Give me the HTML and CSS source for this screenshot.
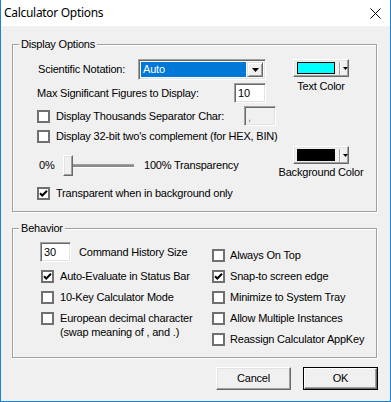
FILE: index.html
```html
<!DOCTYPE html>
<html>
<head>
<meta charset="utf-8">
<title>Calculator Options</title>
<link rel="stylesheet" href="styles.css">
</head>
<body>
<div class="window">
  <div class="titlebar">
    <span class="title">Calculator Options</span>
    <svg class="close" width="11" height="11" viewBox="0 0 11 11"><path d="M0.5 0.5L10.5 10.5M10.5 0.5L0.5 10.5" stroke="#000" stroke-width="1"/></svg>
  </div>
  <div class="client">
    <div class="group g1">
      <span class="legend">Display Options</span>
      <div class="g1-left">
        <div class="row r1">
          <span class="lbl lbl-sci">Scientific Notation:</span>
          <div class="combo">
            <span class="combo-field">Auto</span>
            <span class="combo-btn"><svg width="7" height="4" viewBox="0 0 7 4"><path d="M0 0H7L3.5 4Z" fill="#000"/></svg></span>
          </div>
        </div>
        <div class="row r2">
          <span class="lbl lbl-max">Max Significant Figures to Display:</span>
          <div class="edit">10</div>
        </div>
        <div class="row r3">
          <span class="cb"></span>
          <span class="lbl grow">Display Thousands Separator Char:</span>
          <div class="edit disabled">,</div>
        </div>
        <div class="row r4">
          <span class="cb"></span>
          <span class="lbl">Display 32-bit two's complement (for HEX, BIN)</span>
        </div>
        <div class="row r5">
          <span class="lbl pct">0%</span>
          <div class="slider"><span class="thumb"></span><span class="track"></span></div>
          <span class="lbl trans">100% Transparency</span>
        </div>
        <div class="row r6">
          <span class="cb checked"><svg width="9" height="9" viewBox="0 0 9 9"><path d="M1 4.2L3.3 6.5L8 1.8" fill="none" stroke="#000" stroke-width="2"/></svg></span>
          <span class="lbl">Transparent when in background only</span>
        </div>
      </div>
      <div class="g1-right">
        <div class="colorbtn cbtn-text">
          <span class="swatch cyan"></span>
          <span class="sep"></span>
          <svg class="arr" width="5" height="3" viewBox="0 0 5 3"><path d="M0 0H5L2.5 3Z" fill="#000"/></svg>
        </div>
        <span class="clabel clabel-text">Text Color</span>
        <div class="colorbtn cbtn-bg">
          <span class="swatch black"></span>
          <span class="sep"></span>
          <svg class="arr" width="5" height="3" viewBox="0 0 5 3"><path d="M0 0H5L2.5 3Z" fill="#000"/></svg>
        </div>
        <span class="clabel clabel-bg">Background Color</span>
      </div>
    </div>

    <div class="group g2">
      <span class="legend">Behavior</span>
      <div class="g2-left">
        <div class="row hist">
          <div class="edit edit30">30</div>
          <span class="lbl histlbl">Command History Size</span>
        </div>
        <div class="cbrow first-left">
          <span class="cb checked"><svg width="9" height="9" viewBox="0 0 9 9"><path d="M1 4.2L3.3 6.5L8 1.8" fill="none" stroke="#000" stroke-width="2"/></svg></span>
          <span class="lbl">Auto-Evaluate in Status Bar</span>
        </div>
        <div class="cbrow">
          <span class="cb"></span>
          <span class="lbl">10-Key Calculator Mode</span>
        </div>
        <div class="cbrow multi">
          <span class="cb"></span>
          <span class="lbl">European decimal character<br>(swap meaning of , and .)</span>
        </div>
      </div>
      <div class="g2-right">
        <div class="cbrow">
          <span class="cb"></span>
          <span class="lbl">Always On Top</span>
        </div>
        <div class="cbrow">
          <span class="cb checked"><svg width="9" height="9" viewBox="0 0 9 9"><path d="M1 4.2L3.3 6.5L8 1.8" fill="none" stroke="#000" stroke-width="2"/></svg></span>
          <span class="lbl">Snap-to screen edge</span>
        </div>
        <div class="cbrow">
          <span class="cb"></span>
          <span class="lbl">Minimize to System Tray</span>
        </div>
        <div class="cbrow">
          <span class="cb"></span>
          <span class="lbl">Allow Multiple Instances</span>
        </div>
        <div class="cbrow">
          <span class="cb"></span>
          <span class="lbl">Reassign Calculator AppKey</span>
        </div>
      </div>
    </div>

    <div class="buttons">
      <div class="btn">Cancel</div>
      <div class="btn default"><span class="btn-inner">OK</span></div>
    </div>
  </div>
</div>
</body>
</html>
```

FILE: styles.css
```css
* { box-sizing: border-box; }
html, body { margin: 0; padding: 0; }
body {
  width: 391px;
  height: 402px;
  background: #fff;
  font-family: "Liberation Sans", Arial, sans-serif;
  font-size: 11px;
  letter-spacing: -0.2px;
  color: #000;
  overflow: hidden;
}
.window {
  width: 391px;
  height: 402px;
  border: 1px solid #1883d7;
  border-top: 0;
  display: flex;
  flex-direction: column;
}
.titlebar {
  height: 26px;
  flex: none;
  background: #fff;
  display: flex;
  align-items: center;
  padding-left: 3px;
}
.title {
  font-family: "Noto Sans", "Segoe UI", sans-serif;
  font-size: 12px;
  letter-spacing: -0.3px;
  line-height: 16px;
}
.close { margin-left: auto; margin-right: 9px; }

.client {
  flex: 1;
  background: #f0f0f0;
  padding: 18px 12px 0 11px;
  display: flex;
  flex-direction: column;
}
.group {
  position: relative;
  width: 365px;
  border: 1px solid #a0a0a0;
  box-shadow: inset 1px 1px 0 #fff, 1px 1px 0 #fff;
  display: flex;
  flex: none;
}
.g1 { height: 168px; }
.g2 { height: 130px; margin-top: 16px; }
.legend {
  position: absolute;
  top: -8px;
  left: 6px;
  padding: 0 2px;
  background: #f0f0f0;
  line-height: 14px;
  white-space: nowrap;
}

.lbl { white-space: nowrap; line-height: 13px; }
.grow { flex: 1; }
.row { display: flex; align-items: center; flex: none; }

/* Display options */
.g1-left {
  width: 263px;
  padding: 14px 0 0 24px;
  display: flex;
  flex-direction: column;
}
.r1 { height: 21px; }
.r2 { height: 20px; margin-top: 3px; }
.r3 { height: 20px; margin-top: 3px; }
.r4 { height: 17px; margin-top: 2px; }
.r5 { height: 21px; margin-top: 10px; }
.r6 { height: 17px; margin-top: 9px; }
.lbl-sci { width: 101px; padding-left: 1px; }
.lbl-max { width: 197px; }
.pct { width: 26px; padding-left: 2px; }
.trans { margin-left: 10px; }

.combo {
  width: 128px;
  height: 21px;
  background: #fff;
  border: 1px solid;
  border-color: #a0a0a0 #fff #fff #a0a0a0;
  box-shadow: inset 1px 1px 0 #696969, inset -1px -1px 0 #e3e3e3;
  padding: 2px;
  display: flex;
}
.combo-field {
  flex: 1;
  background: #0078d7;
  color: #fff;
  padding-left: 2px;
  line-height: 15px;
  margin-right: 1px;
}
.combo-btn {
  width: 16px;
  background: #f0f0f0;
  border: 1px solid;
  border-color: #e3e3e3 #696969 #696969 #e3e3e3;
  box-shadow: inset 1px 1px 0 #fff, inset -1px -1px 0 #a0a0a0;
  display: flex;
  align-items: center;
  justify-content: center;
}

.edit {
  width: 32px;
  height: 20px;
  background: #fff;
  border: 1px solid;
  border-color: #a0a0a0 #fff #fff #a0a0a0;
  box-shadow: inset 1px 1px 0 #696969, inset -1px -1px 0 #e3e3e3;
  padding-left: 3px;
  line-height: 18px;
  flex: none;
}
.edit.disabled {
  background: #f0f0f0;
  color: #8a8a8a;
  line-height: 20px;
}

.cb {
  width: 13px;
  height: 13px;
  flex: none;
  background: #fff;
  border: 2px solid #707070;
  margin-right: 6px;
  display: flex;
  align-items: center;
  justify-content: center;
}

.slider {
  width: 71px;
  height: 21px;
  display: flex;
  align-items: center;
}
.thumb {
  width: 10px;
  height: 21px;
  flex: none;
  background: #f0f0f0;
  border: 1px solid;
  border-color: #fff #696969 #696969 #fff;
  box-shadow: inset -1px -1px 0 #a0a0a0, inset 1px 1px 0 #e3e3e3;
}
.track {
  flex: 1;
  height: 4px;
  border-top: 1px solid #a0a0a0;
  border-bottom: 1px solid #fff;
  background: #8c8c8c;
}

.g1-right {
  width: 90px;
  display: flex;
  flex-direction: column;
  align-items: center;
  padding-top: 14px;
}
.colorbtn {
  width: 56px;
  height: 18px;
  flex: none;
  background: #f0f0f0;
  border: 1px solid;
  border-color: #fff #696969 #696969 #fff;
  box-shadow: inset -1px -1px 0 #a0a0a0, inset 1px 1px 0 #e3e3e3;
  display: flex;
  align-items: center;
  padding-left: 3px;
}
.swatch {
  width: 38px;
  height: 12px;
  border: 1px solid #000;
}
.swatch.cyan { background: #00ffff; }
.swatch.black { background: #000; }
.sep {
  width: 2px;
  height: 13px;
  margin-left: 4px;
  border-left: 1px solid #a0a0a0;
  border-right: 1px solid #fff;
}
.arr { margin-left: 2px; }
.clabel { line-height: 13px; white-space: nowrap; }
.clabel-text { margin-top: 3px; }
.cbtn-bg { margin-top: 53px; }
.clabel-bg { margin-top: 2px; }

/* Behavior */
.g2-left {
  width: 199px;
  padding: 13px 0 0 27px;
  display: flex;
  flex-direction: column;
}
.hist { height: 20px; }
.edit30 { width: 31px; }
.histlbl { margin-left: 8px; }
.cbrow {
  display: flex;
  align-items: flex-start;
  height: 21px;
  padding-top: 4px;
  flex: none;
}
.g2-left .cbrow { margin-left: 1px; }
.first-left { margin-top: 4px; }
.cbrow.multi { height: 34px; }
.cbrow.multi .lbl { line-height: 14px; margin-top: -1px; }
.g2-right {
  flex: 1;
  padding-top: 16px;
  display: flex;
  flex-direction: column;
}
.g2-right .cb { margin-right: 5px; }

.buttons {
  display: flex;
  justify-content: flex-end;
  gap: 12px;
  margin-top: 9px;
}
.btn {
  width: 75px;
  height: 23px;
  background: #f0f0f0;
  border: 1px solid;
  border-color: #fff #696969 #696969 #fff;
  box-shadow: inset -1px -1px 0 #a0a0a0, inset 1px 1px 0 #e3e3e3;
  display: flex;
  align-items: center;
  justify-content: center;
  line-height: 13px;
}
.btn.default {
  border: 1px solid #000;
  box-shadow: none;
  padding: 0;
}
.btn-inner {
  width: 100%;
  height: 100%;
  border: 1px solid;
  border-color: #fff #696969 #696969 #fff;
  box-shadow: inset -1px -1px 0 #a0a0a0;
  display: flex;
  align-items: center;
  justify-content: center;
}
```
